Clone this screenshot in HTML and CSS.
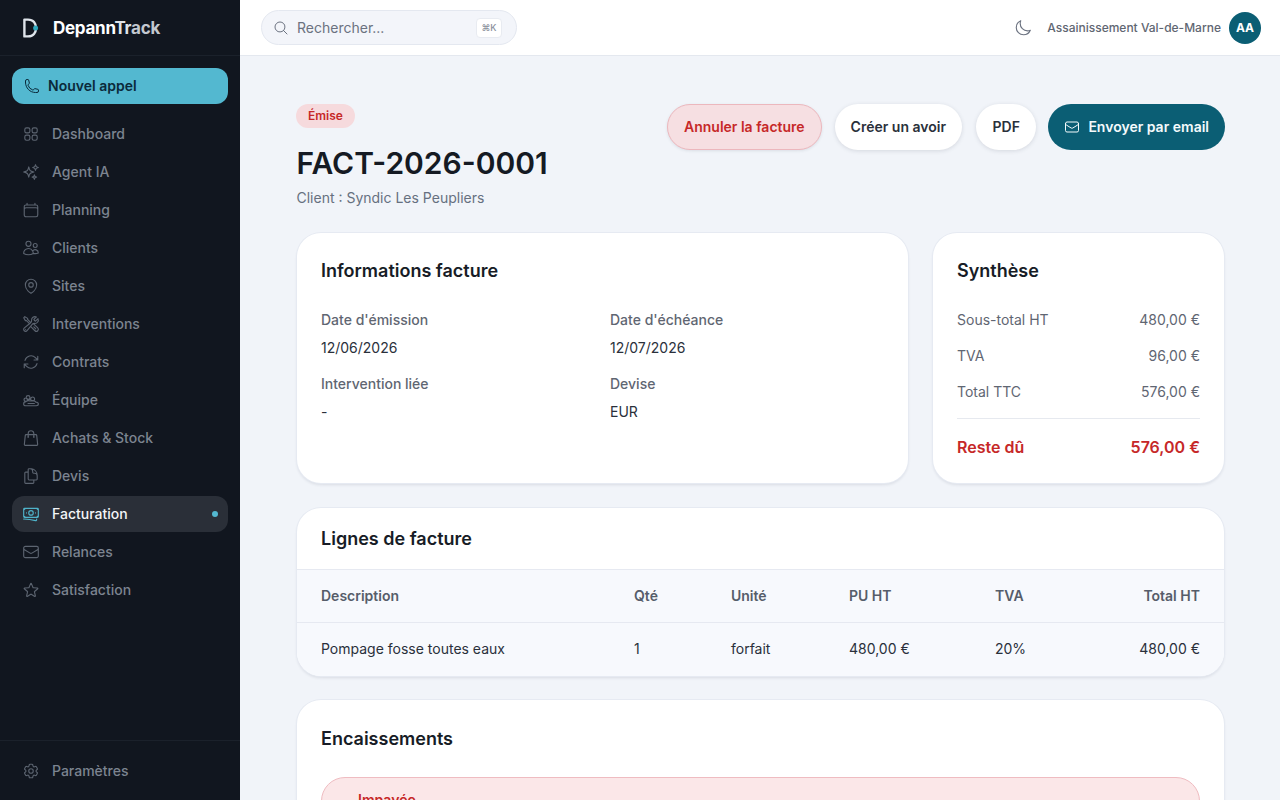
FILE: index.html
```html
<!DOCTYPE html>
<html lang="fr">
<head>
<meta charset="utf-8">
<title>DepannTrack</title>
<link rel="stylesheet" href="styles.css">
</head>
<body>
<div class="app">
  <aside class="sidebar">
    <div class="brand">
      <svg class="brand-logo" viewBox="0 0 16 20" fill="none"><path d="M1.4 1.6 H5 C10.4 1.6 13 5.4 13 10 C13 14.6 10.4 18.4 5 18.4 H1.4 Z" stroke="#dfe4ea" stroke-width="2.4" stroke-linejoin="round"/><circle cx="12.6" cy="10" r="2.5" fill="#2fa7bd"/></svg>
      <span class="brand-name">Depann<span class="brand-tr">Tr</span><span class="brand-ack">ack</span></span>
    </div>
    <div class="new-wrap">
      <a class="new-call"><svg class="ico-call" viewBox="0 0 24 24"><path d="M2.25 6.75c0 8.284 6.716 15 15 15h2.25a2.25 2.25 0 0 0 2.25-2.25v-1.372c0-.516-.351-.966-.852-1.091l-4.423-1.106c-.44-.11-.902.055-1.173.417l-.97 1.293c-.282.376-.769.542-1.21.38a12.035 12.035 0 0 1-7.143-7.143c-.162-.441.004-.928.38-1.21l1.293-.97c.363-.271.527-.734.417-1.173L6.963 3.102a1.125 1.125 0 0 0-1.091-.852H4.5A2.25 2.25 0 0 0 2.25 4.5v2.25Z"/></svg>Nouvel appel</a>
    </div>
    <nav class="nav">
      <a class="nav-item"><svg class="ico" viewBox="0 0 24 24"><path d="M3.75 6A2.25 2.25 0 0 1 6 3.75h2.25A2.25 2.25 0 0 1 10.5 6v2.25a2.25 2.25 0 0 1-2.25 2.25H6a2.25 2.25 0 0 1-2.25-2.25V6ZM3.75 15.75A2.25 2.25 0 0 1 6 13.5h2.25a2.25 2.25 0 0 1 2.25 2.25V18a2.25 2.25 0 0 1-2.25 2.25H6A2.25 2.25 0 0 1 3.75 18v-2.25ZM13.5 6a2.25 2.25 0 0 1 2.25-2.25H18A2.25 2.25 0 0 1 20.25 6v2.25A2.25 2.25 0 0 1 18 10.5h-2.25a2.25 2.25 0 0 1-2.25-2.25V6ZM13.5 15.75a2.25 2.25 0 0 1 2.25-2.25H18a2.25 2.25 0 0 1 2.25 2.25V18A2.25 2.25 0 0 1 18 20.25h-2.25A2.25 2.25 0 0 1 13.5 18v-2.25Z"/></svg>Dashboard</a>
      <a class="nav-item"><svg class="ico" viewBox="0 0 24 24"><path d="M9.813 15.904 9 18.75l-.813-2.846a4.5 4.5 0 0 0-3.09-3.09L2.25 12l2.846-.813a4.5 4.5 0 0 0 3.09-3.09L9 5.25l.813 2.846a4.5 4.5 0 0 0 3.09 3.09L15.75 12l-2.846.813a4.5 4.5 0 0 0-3.09 3.09ZM18.259 8.715 18 9.75l-.259-1.035a3.375 3.375 0 0 0-2.455-2.456L14.25 6l1.036-.259a3.375 3.375 0 0 0 2.455-2.456L18 2.25l.259 1.035a3.375 3.375 0 0 0 2.456 2.456L21.75 6l-1.035.259a3.375 3.375 0 0 0-2.456 2.456ZM16.894 20.567 16.5 21.75l-.394-1.183a2.25 2.25 0 0 0-1.423-1.423L13.5 18.75l1.183-.394a2.25 2.25 0 0 0 1.423-1.423l.394-1.183.394 1.183a2.25 2.25 0 0 0 1.423 1.423l1.183.394-1.183.394a2.25 2.25 0 0 0-1.423 1.423Z"/></svg>Agent IA</a>
      <a class="nav-item"><svg class="ico" viewBox="0 0 24 24"><path d="M6.75 3v2.25M17.25 3v2.25M3 18.75V7.5a2.25 2.25 0 0 1 2.25-2.25h13.5A2.25 2.25 0 0 1 21 7.5v11.25m-18 0A2.25 2.25 0 0 0 5.25 21h13.5A2.25 2.25 0 0 0 21 18.75m-18 0v-7.5A2.25 2.25 0 0 1 5.25 9h13.5A2.25 2.25 0 0 1 21 11.25v7.5"/></svg>Planning</a>
      <a class="nav-item"><svg class="ico" viewBox="0 0 24 24"><path d="M15 19.128a9.38 9.38 0 0 0 2.625.372 9.337 9.337 0 0 0 4.121-.952 4.125 4.125 0 0 0-7.533-2.493M15 19.128v-.003c0-1.113-.285-2.16-.786-3.07M15 19.128v.106A12.318 12.318 0 0 1 8.624 21c-2.331 0-4.512-.645-6.374-1.766l-.001-.109a6.375 6.375 0 0 1 11.964-3.07M12 6.375a3.375 3.375 0 1 1-6.75 0 3.375 3.375 0 0 1 6.75 0Zm8.25 2.25a2.625 2.625 0 1 1-5.25 0 2.625 2.625 0 0 1 5.25 0Z"/></svg>Clients</a>
      <a class="nav-item"><svg class="ico" viewBox="0 0 24 24"><path d="M15 10.5a3 3 0 1 1-6 0 3 3 0 0 1 6 0Z"/><path d="M19.5 10.5c0 7.142-7.5 11.25-7.5 11.25S4.5 17.642 4.5 10.5a7.5 7.5 0 1 1 15 0Z"/></svg>Sites</a>
      <a class="nav-item"><svg class="ico" viewBox="0 0 24 24"><path d="M11.42 15.17 17.25 21A2.652 2.652 0 0 0 21 17.25l-5.877-5.877M11.42 15.17l2.496-3.03c.317-.384.74-.626 1.208-.766M11.42 15.17l-4.655 5.653a2.548 2.548 0 1 1-3.586-3.586l6.837-5.63m5.108-.233c.55-.164 1.163-.188 1.743-.14a4.5 4.5 0 0 0 4.486-6.336l-3.276 3.277a3.004 3.004 0 0 1-2.25-2.25l3.276-3.276a4.5 4.5 0 0 0-6.336 4.486c.091 1.076-.071 2.264-.904 2.95l-.102.085m-1.745 1.437L5.909 7.5H4.5L2.25 3.75l1.5-1.5L7.5 4.5v1.409l4.26 4.26m-1.745 1.437 1.745-1.437m6.615 8.206L15.75 15.75M4.867 19.125h.008v.008h-.008v-.008Z"/></svg>Interventions</a>
      <a class="nav-item"><svg class="ico" viewBox="0 0 24 24"><path d="M16.023 9.348h4.992v-.001M2.985 19.644v-4.992m0 0h4.992m-4.993 0 3.181 3.183a8.25 8.25 0 0 0 13.803-3.7M4.031 9.865a8.25 8.25 0 0 1 13.803-3.7l3.181 3.182m0-4.991v4.99"/></svg>Contrats</a>
      <a class="nav-item"><svg class="ico" viewBox="0 0 24 24"><path d="M5.6 8.6a2.5 2.5 0 1 1 5 0 2.5 2.5 0 0 1-5 0ZM2.7 11.6a2.3 2.3 0 1 1 4.6 0 2.3 2.3 0 0 1-4.6 0ZM11.6 10.6a2.6 2.6 0 1 1 5.2 0 2.6 2.6 0 0 1-5.2 0ZM7.3 12.6c1.5-1.4 3-1.6 4.6-.9M2.2 17.2c0-1.8 1.4-3 3.2-3 .9-.9 3.5-1.6 5.3-.8 2.8-1.2 6.8-.2 7.8 1.4 1.6 0 3.3 1 3.3 2.6 0 1.5-1.3 2.2-2.8 2.2H5c-1.6 0-2.8-.8-2.8-2.4ZM8 16.6h8.5"/></svg>Équipe</a>
      <a class="nav-item"><svg class="ico" viewBox="0 0 24 24"><path d="M15.75 10.5V6a3.75 3.75 0 1 0-7.5 0v4.5m11.356-1.993 1.263 12c.07.665-.45 1.243-1.119 1.243H4.25a1.125 1.125 0 0 1-1.12-1.243l1.264-12A1.125 1.125 0 0 1 5.513 7.5h12.974c.576 0 1.059.435 1.119 1.007ZM8.625 10.5a.375.375 0 1 1-.75 0 .375.375 0 0 1 .75 0Zm7.5 0a.375.375 0 1 1-.75 0 .375.375 0 0 1 .75 0Z"/></svg>Achats &amp; Stock</a>
      <a class="nav-item"><svg class="ico" viewBox="0 0 24 24"><path d="M15.75 17.25v3.375c0 .621-.504 1.125-1.125 1.125h-9.75a1.125 1.125 0 0 1-1.125-1.125V7.875c0-.621.504-1.125 1.125-1.125H6.75a9.06 9.06 0 0 1 1.5.124m7.5 10.376h3.375c.621 0 1.125-.504 1.125-1.125V11.25c0-4.46-3.243-8.161-7.5-8.876a9.06 9.06 0 0 0-1.5-.124H9.375c-.621 0-1.125.504-1.125 1.125v3.5m7.5 10.375H9.375a1.125 1.125 0 0 1-1.125-1.125v-9.25m12 6.625v-1.875a3.375 3.375 0 0 0-3.375-3.375h-1.5a1.125 1.125 0 0 1-1.125-1.125v-1.5a3.375 3.375 0 0 0-3.375-3.375H9.75"/></svg>Devis</a>
      <a class="nav-item is-active"><svg class="ico" viewBox="0 0 24 24"><path d="M2.25 18.75a60.07 60.07 0 0 1 15.797 2.101c.727.198 1.453-.342 1.453-1.096V18.75M3.75 4.5v.75A.75.75 0 0 1 3 6h-.75m0 0v-.375c0-.621.504-1.125 1.125-1.125H20.25M2.25 6v9m18-10.5v.75c0 .414.336.75.75.75h.75m-1.5-1.5h.375c.621 0 1.125.504 1.125 1.125v9.75c0 .621-.504 1.125-1.125 1.125h-.375m1.5-1.5H21a.75.75 0 0 0-.75.75v.75m0 0H3.75m0 0h-.375a1.125 1.125 0 0 1-1.125-1.125V15m1.5 1.5v-.75A.75.75 0 0 0 3 15h-.75M15 10.5a3 3 0 1 1-6 0 3 3 0 0 1 6 0Zm3 0h.008v.008H18V10.5Zm-12 0h.008v.008H6V10.5Z"/></svg>Facturation<span class="nav-dot"></span></a>
      <a class="nav-item"><svg class="ico" viewBox="0 0 24 24"><path d="M21.75 6.75v10.5a2.25 2.25 0 0 1-2.25 2.25h-15a2.25 2.25 0 0 1-2.25-2.25V6.75m19.5 0A2.25 2.25 0 0 0 19.5 4.5h-15a2.25 2.25 0 0 0-2.25 2.25m19.5 0v.243a2.25 2.25 0 0 1-1.07 1.916l-7.5 4.615a2.25 2.25 0 0 1-2.36 0L3.32 8.91a2.25 2.25 0 0 1-1.07-1.916V6.75"/></svg>Relances</a>
      <a class="nav-item"><svg class="ico" viewBox="0 0 24 24"><path d="M11.48 3.499a.562.562 0 0 1 1.04 0l2.125 5.111a.563.563 0 0 0 .475.345l5.518.442c.499.04.701.663.321.988l-4.204 3.602a.563.563 0 0 0-.182.557l1.285 5.385a.562.562 0 0 1-.84.61l-4.725-2.885a.562.562 0 0 0-.586 0L6.982 20.54a.562.562 0 0 1-.84-.61l1.285-5.386a.562.562 0 0 0-.182-.557l-4.204-3.602a.562.562 0 0 1 .321-.988l5.518-.442a.563.563 0 0 0 .475-.345L11.48 3.5Z"/></svg>Satisfaction</a>
    </nav>
    <div class="side-foot">
      <a class="nav-item"><svg class="ico" viewBox="0 0 24 24"><path d="M9.594 3.94c.09-.542.56-.94 1.11-.94h2.593c.55 0 1.02.398 1.11.94l.213 1.281c.063.374.313.686.645.87.074.04.147.083.22.127.325.196.72.257 1.075.124l1.217-.456a1.125 1.125 0 0 1 1.37.49l1.296 2.247a1.125 1.125 0 0 1-.26 1.431l-1.003.827c-.293.241-.438.613-.43.992a7.723 7.723 0 0 1 0 .255c-.008.378.137.75.43.991l1.004.827c.424.35.534.955.26 1.43l-1.298 2.247a1.125 1.125 0 0 1-1.369.491l-1.217-.456c-.355-.133-.75-.072-1.076.124a6.47 6.47 0 0 1-.22.128c-.331.183-.581.495-.644.869l-.213 1.281c-.09.543-.56.94-1.11.94h-2.594c-.55 0-1.019-.398-1.11-.94l-.213-1.281c-.062-.374-.312-.686-.644-.87a6.52 6.52 0 0 1-.22-.127c-.325-.196-.72-.257-1.076-.124l-1.217.456a1.125 1.125 0 0 1-1.369-.49l-1.297-2.247a1.125 1.125 0 0 1 .26-1.431l1.004-.827c.292-.24.437-.613.43-.991a6.932 6.932 0 0 1 0-.255c.007-.38-.138-.751-.43-.992l-1.004-.827a1.125 1.125 0 0 1-.26-1.43l1.297-2.247a1.125 1.125 0 0 1 1.37-.491l1.216.456c.356.133.751.072 1.076-.124.072-.044.146-.086.22-.128.332-.183.582-.495.644-.869l.214-1.28Z"/><path d="M15 12a3 3 0 1 1-6 0 3 3 0 0 1 6 0Z"/></svg>Paramètres</a>
    </div>
  </aside>

  <div class="shell">
    <header class="topbar">
      <div class="search">
        <svg class="ico-search" viewBox="0 0 24 24"><path d="m21 21-5.197-5.197m0 0A7.5 7.5 0 1 0 5.196 5.196a7.5 7.5 0 0 0 10.607 10.607Z"/></svg>
        <span class="search-text">Rechercher...</span>
        <kbd class="kbd">⌘K</kbd>
      </div>
      <div class="top-right">
        <svg class="ico-moon" viewBox="0 0 24 24"><path d="M21.752 15.002A9.72 9.72 0 0 1 18 15.75c-5.385 0-9.75-4.365-9.75-9.75 0-1.33.266-2.597.748-3.752A9.753 9.753 0 0 0 3 11.25C3 16.635 7.365 21 12.75 21a9.753 9.753 0 0 0 9.002-5.998Z"/></svg>
        <span class="org">Assainissement Val-de-Marne</span>
        <span class="avatar">AA</span>
      </div>
    </header>

    <main class="content">
      <section class="page-head">
        <div class="head-left">
          <span class="badge">Émise</span>
          <h1 class="title">FACT-2026-0001</h1>
          <p class="subtitle">Client : Syndic Les Peupliers</p>
        </div>
        <div class="actions">
          <a class="btn btn-danger">Annuler la facture</a>
          <a class="btn btn-white">Créer un avoir</a>
          <a class="btn btn-white btn-pdf">PDF</a>
          <a class="btn btn-primary"><svg class="ico-mail" viewBox="0 0 24 24"><path d="M21.75 6.75v10.5a2.25 2.25 0 0 1-2.25 2.25h-15a2.25 2.25 0 0 1-2.25-2.25V6.75m19.5 0A2.25 2.25 0 0 0 19.5 4.5h-15a2.25 2.25 0 0 0-2.25 2.25m19.5 0v.243a2.25 2.25 0 0 1-1.07 1.916l-7.5 4.615a2.25 2.25 0 0 1-2.36 0L3.32 8.91a2.25 2.25 0 0 1-1.07-1.916V6.75"/></svg>Envoyer par email</a>
        </div>
      </section>

      <section class="top-grid">
        <div class="card card-info">
          <h2 class="card-title">Informations facture</h2>
          <dl class="info-grid">
            <div class="info"><dt>Date d'émission</dt><dd>12/06/2026</dd></div>
            <div class="info"><dt>Date d'échéance</dt><dd>12/07/2026</dd></div>
            <div class="info"><dt>Intervention liée</dt><dd>-</dd></div>
            <div class="info"><dt>Devise</dt><dd>EUR</dd></div>
          </dl>
        </div>
        <div class="card card-sum">
          <h2 class="card-title">Synthèse</h2>
          <div class="sum-row"><span>Sous-total HT</span><span>480,00 €</span></div>
          <div class="sum-row"><span>TVA</span><span>96,00 €</span></div>
          <div class="sum-row"><span>Total TTC</span><span>576,00 €</span></div>
          <div class="sum-due"><span>Reste dû</span><span>576,00 €</span></div>
        </div>
      </section>

      <section class="card card-lines">
        <h2 class="card-title lines-title">Lignes de facture</h2>
        <table class="lines">
          <colgroup><col class="c-desc"><col class="c-qty"><col class="c-unit"><col class="c-pu"><col class="c-tva"><col class="c-total"></colgroup>
          <thead><tr><th>Description</th><th>Qté</th><th>Unité</th><th>PU HT</th><th>TVA</th><th class="num">Total HT</th></tr></thead>
          <tbody><tr><td>Pompage fosse toutes eaux</td><td>1</td><td>forfait</td><td>480,00 €</td><td>20%</td><td class="num">480,00 €</td></tr></tbody>
        </table>
      </section>

      <section class="card card-pay">
        <h2 class="card-title">Encaissements</h2>
        <div class="alert"><span class="alert-title">Impayée</span></div>
      </section>
    </main>
  </div>
</div>
</body>
</html>
```
FILE: styles.css
```css
* { box-sizing: border-box; }
html, body { margin: 0; height: 100%; overflow: hidden; }
body { font-family: Inter, "Liberation Sans", sans-serif; color: #171c26; background: #f1f4f9; }
a { display: flex; text-decoration: none; }
h1, h2, p, dl, dd { margin: 0; }
svg { fill: none; stroke: currentColor; stroke-width: 1.5; stroke-linecap: round; stroke-linejoin: round; flex: none; }

.app { display: flex; height: 800px; }

/* Sidebar */
.sidebar { width: 240px; flex: none; height: 800px; display: flex; flex-direction: column; background: #11161f; }
.brand { height: 56px; flex: none; display: flex; align-items: center; padding-left: 23px; gap: 14px; border-bottom: 1px solid #1b212b; }
.brand-logo { width: 16px; height: 20px; stroke: none; }
.brand-name { font-size: 17px; font-weight: 700; color: #fff; letter-spacing: -0.27px; }
.brand-tr { color: #dfe3e8; }
.brand-ack { color: #c3c8cf; }
.new-wrap { padding: 12px 12px 0; }
.new-call { height: 36px; align-items: center; padding: 0 0 1px 12px; gap: 8px; border-radius: 12px; background: #53b8d0; color: #0b2a3a; font-size: 14px; font-weight: 600; }
.ico-call { width: 16px; height: 16px; }
.nav { flex: 1; display: flex; flex-direction: column; gap: 2px; padding: 12px 12px 0; }
.nav-item { height: 36px; align-items: center; padding: 0 0 1px 10px; gap: 12px; border-radius: 12px; color: #7c8490; font-size: 14px; font-weight: 500; }
.ico { width: 18px; height: 18px; margin-top: 1px; color: #5c6470; }
.is-active { background: #2a2f38; color: #f3f5f7; padding-right: 10px; }
.is-active .ico { color: #4fb3c9; }
.nav-dot { width: 6px; height: 6px; border-radius: 50%; background: #53b8d0; margin-left: auto; }
.side-foot { height: 60px; flex: none; padding: 12px 12px 0; border-top: 1px solid #1b212b; }

/* Top bar */
.shell { flex: 1; min-width: 0; display: flex; flex-direction: column; }
.topbar { height: 56px; flex: none; display: flex; align-items: center; justify-content: space-between; padding: 0 19px 0 21px; background: #fff; border-bottom: 1px solid #e4e8ef; }
.search { width: 256px; height: 35px; display: flex; align-items: center; padding: 0 14px 0 11px; gap: 8px; border-radius: 18px; background: #f3f5fa; border: 1px solid #e4e8f0; }
.ico-search { width: 16px; height: 16px; color: #6b7280; }
.search-text { flex: 1; font-size: 14px; color: #6b7280; }
.kbd { width: 26px; height: 20px; display: flex; align-items: center; justify-content: center; border-radius: 4px; background: #fff; border: 1px solid #e8ebf1; font-family: Inter, "DejaVu Sans", sans-serif; font-size: 9px; color: #8a909c; font-weight: 500; }
.top-right { display: flex; align-items: center; }
.ico-moon { width: 18px; height: 18px; color: #6b7280; margin-right: 15px; }
.org { font-size: 12px; font-weight: 500; color: #5f6672; margin-right: 8px; }
.avatar { width: 32px; height: 32px; display: flex; align-items: center; justify-content: center; border-radius: 50%; background: #0b5e74; color: #fff; font-size: 12px; font-weight: 700; }

/* Content */
.content { flex: 1; min-height: 0; overflow: hidden; padding: 48px 55px 0 57px; }
.page-head { display: flex; justify-content: space-between; align-items: flex-start; height: 105px; }
.badge { display: inline-block; height: 24px; line-height: 24px; margin-left: -1px; padding: 0 12px; border-radius: 12px; background: #f6dadd; color: #c62828; font-size: 12px; font-weight: 600; }
.title { margin: 16px 0 0 -0.5px; font-size: 30px; line-height: 38px; font-weight: 600; color: #151a23; }
.subtitle { margin: 6px 0 0 -0.5px; font-size: 14px; line-height: 20px; color: #667080; }
.actions { display: flex; gap: 13px; }
.btn { height: 46px; align-items: center; padding: 0 16px 1px; border-radius: 23px; font-size: 14px; font-weight: 600; }
.btn-danger { background: #f6dfe2; color: #c62828; border: 1px solid #ecb7bd; box-shadow: 0 1px 3px rgba(60,70,90,.12); }
.btn-white { background: #fff; color: #2a303b; box-shadow: 0 1px 4px rgba(60,70,90,.16); }
.btn-pdf { padding: 0 16.5px 1px; margin: 0 -1px 0 1px; }
.btn-primary { background: #0b5e74; color: #f4fafc; gap: 8px; }
.ico-mail { width: 16px; height: 16px; margin-top: 1px; }

.card { background: #fff; border-radius: 24px; box-shadow: 0 0 0 1px #e6eaf2, 0 2px 3px rgba(50,60,85,.12); }
.card-title { font-size: 18px; line-height: 28px; font-weight: 600; color: #171c26; }
.top-grid { display: grid; grid-template-columns: 611px 291px; gap: 25px; margin: 24px 1px 0 0; }
.card-info { height: 250px; padding: 24px; }
.info-grid { display: grid; grid-template-columns: 289px 1fr; margin-top: 25px; row-gap: 16px; }
.info dt { font-size: 14px; line-height: 20px; font-weight: 500; color: #5f6672; }
.info dd { margin-top: 8px; font-size: 14px; line-height: 20px; color: #2a303b; }
.card-sum { height: 250px; padding: 24px; }
.sum-row { display: flex; justify-content: space-between; font-size: 14px; line-height: 20px; color: #5f6672; margin-top: 16px; }
.card-title + .sum-row { margin-top: 25px; }
.sum-due { display: flex; justify-content: space-between; margin-top: 16px; padding-top: 16px; border-top: 1px solid #e6e9ef; font-size: 16px; line-height: 24px; font-weight: 600; color: #c62828; }

.card-lines { margin: 25px 1px 0 0; overflow: hidden; }
.lines-title { padding: 17px 24px 16px; }
.lines { width: 100%; border-collapse: collapse; table-layout: fixed; font-size: 14px; }
.c-desc { width: 313px; }
.c-qty { width: 97px; }
.c-unit { width: 118px; }
.c-pu { width: 146px; }
.c-tva { width: 100px; }
.lines th, .lines td { height: 53px; padding: 0 0 1px 24px; text-align: left; background: #f7f9fd; border-top: 1px solid #e6e9f1; }
.lines th { font-weight: 600; color: #565d6a; padding-bottom: 2px; }
.lines td { color: #2a303b; }
.lines th.num, .lines td.num { text-align: right; padding-right: 24px; padding-left: 0; }

.card-pay { margin: 24px 1px 0 0; height: 200px; padding: 25px 24px 24px; }
.alert { margin-top: 24px; height: 80px; padding: 11px 36px; border-radius: 24px; background: #fbe7e8; border: 1px solid #efbcc1; }
.alert-title { font-size: 14px; line-height: 20px; font-weight: 600; color: #c62828; }
```
